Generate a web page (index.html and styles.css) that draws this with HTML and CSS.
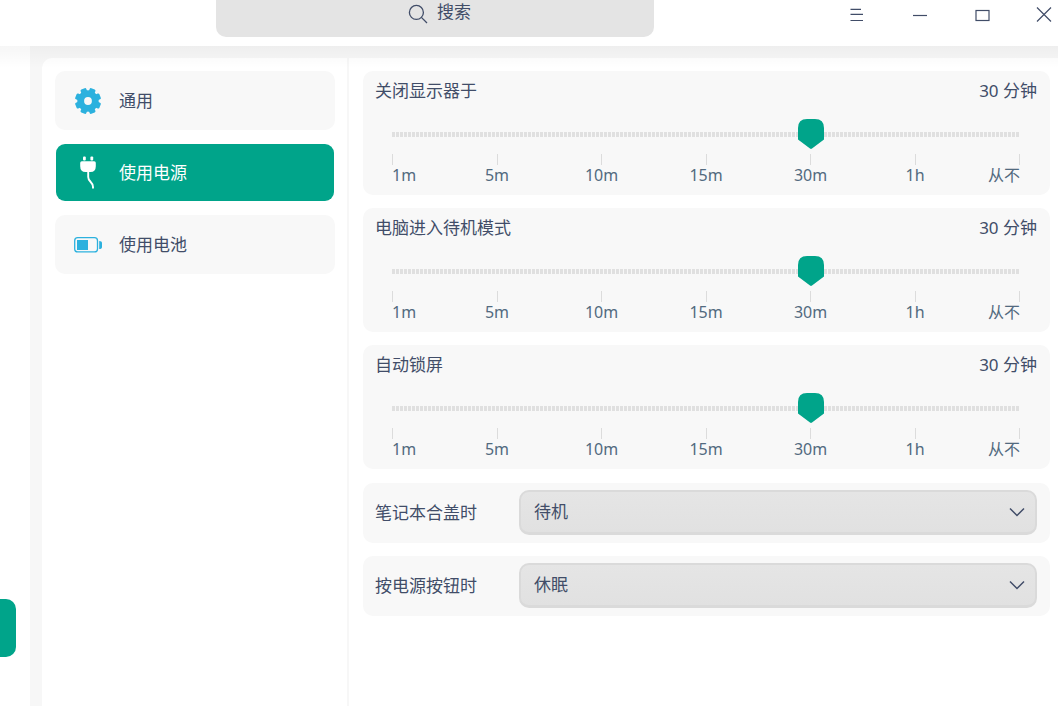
FILE: index.html
```html
<!DOCTYPE html>
<html lang="zh-CN">
<head>
    <meta charset="UTF-8">
    <meta name="viewport" content="width=device-width, initial-scale=1.0">
    <title>电源管理</title>
    <link rel="stylesheet" href="styles.css">
</head>
<body>
    <header class="titlebar">
        <label class="search">
            <svg width="20" height="20" viewBox="0 0 20 20" fill="none" stroke="currentColor" stroke-width="1.3">
                <circle cx="8.4" cy="8.4" r="7"/>
                <path d="M13.4 13.4 L19 19"/>
            </svg>
            <input type="text" class="search-input" placeholder="搜索" aria-label="搜索">
        </label>
        <div class="window-controls">
            <button type="button" class="window-button" aria-label="菜单">
                <svg width="16" height="16" viewBox="0 0 16 16" fill="none" stroke="currentColor" stroke-width="1.2">
                    <path d="M0.5 2.3 H11 M0.5 7.3 H13 M0.5 13.5 H13"/>
                </svg>
            </button>
            <button type="button" class="window-button" aria-label="最小化">
                <svg width="16" height="16" viewBox="0 0 16 16" fill="none" stroke="currentColor" stroke-width="1.2">
                    <path d="M1 8.5 H15"/>
                </svg>
            </button>
            <button type="button" class="window-button" aria-label="最大化">
                <svg width="16" height="16" viewBox="0 0 16 16" fill="none" stroke="currentColor" stroke-width="1.2">
                    <rect x="2" y="3.5" width="13" height="10"/>
                </svg>
            </button>
            <button type="button" class="window-button" aria-label="关闭">
                <svg width="16" height="16" viewBox="0 0 16 16" fill="none" stroke="currentColor" stroke-width="1.2">
                    <path d="M1 0.5 L15 14.5 M15 0.5 L1 14.5"/>
                </svg>
            </button>
        </div>
    </header>

    <div class="main">
        <aside class="rail">
            <div class="rail-active"></div>
        </aside>

        <div class="workspace">
            <nav class="nav">
                <a href="#" class="nav-item">
                    <svg class="nav-icon" width="32" height="34" viewBox="-16 -17 32 34" fill="#2cb1de">
                        <circle r="7.3" fill="none" stroke="#2cb1de" stroke-width="6.8"/>
                        <g id="teeth">
                            <rect x="-3.1" y="-13.1" width="6.2" height="5" rx="1.3" transform="rotate(22.5)"/>
                            <rect x="-3.1" y="-13.1" width="6.2" height="5" rx="1.3" transform="rotate(67.5)"/>
                            <rect x="-3.1" y="-13.1" width="6.2" height="5" rx="1.3" transform="rotate(112.5)"/>
                            <rect x="-3.1" y="-13.1" width="6.2" height="5" rx="1.3" transform="rotate(157.5)"/>
                        </g>
                        <use href="#teeth" transform="rotate(180)"/>
                    </svg>
                    <span>通用</span>
                </a>
                <a href="#" class="nav-item active">
                    <svg class="nav-icon" width="32" height="34" viewBox="0 0 32 34" fill="#fff">
                        <rect x="11" y="0.5" width="2.8" height="4" rx="1"/>
                        <rect x="18.4" y="0.5" width="2.8" height="4" rx="1"/>
                        <path d="M9.8 5.3 H22.2 Q23.8 5.3 23.8 6.9 V10 Q23.8 16 18.5 16 H13.5 Q8.2 16 8.2 10 V6.9 Q8.2 5.3 9.8 5.3 Z"/>
                        <path d="M16.2 15 V21 C16.2 26 21 25.5 21 31 V32.5" fill="none" stroke="#fff" stroke-width="1.9"/>
                    </svg>
                    <span>使用电源</span>
                </a>
                <a href="#" class="nav-item">
                    <svg class="nav-icon" width="32" height="34" viewBox="0 0 32 34" fill="#2cb1de">
                        <rect x="2.7" y="9.7" width="22.8" height="14.2" rx="3" fill="none" stroke="#2cb1de" stroke-width="1.3"/>
                        <rect x="5" y="12" width="11" height="10"/>
                        <path d="M27.2 13 Q30 13 30 15 V19 Q30 21 27.2 21 Z"/>
                    </svg>
                    <span>使用电池</span>
                </a>
            </nav>

            <main class="content">
                <div class="group">
                    <section class="card">
                        <div class="card-header">
                            <label for="display-off">关闭显示器于</label>
                            <output for="display-off">30 分钟</output>
                        </div>
                        <input type="range" class="slider" id="display-off" min="0" max="6" value="4">
                        <div class="scale">
                            <span>1m</span>
                            <span>5m</span>
                            <span>10m</span>
                            <span>15m</span>
                            <span>30m</span>
                            <span>1h</span>
                            <span>从不</span>
                        </div>
                    </section>
                    <section class="card">
                        <div class="card-header">
                            <label for="suspend">电脑进入待机模式</label>
                            <output for="suspend">30 分钟</output>
                        </div>
                        <input type="range" class="slider" id="suspend" min="0" max="6" value="4">
                        <div class="scale">
                            <span>1m</span>
                            <span>5m</span>
                            <span>10m</span>
                            <span>15m</span>
                            <span>30m</span>
                            <span>1h</span>
                            <span>从不</span>
                        </div>
                    </section>
                    <section class="card">
                        <div class="card-header">
                            <label for="auto-lock">自动锁屏</label>
                            <output for="auto-lock">30 分钟</output>
                        </div>
                        <input type="range" class="slider" id="auto-lock" min="0" max="6" value="4">
                        <div class="scale">
                            <span>1m</span>
                            <span>5m</span>
                            <span>10m</span>
                            <span>15m</span>
                            <span>30m</span>
                            <span>1h</span>
                            <span>从不</span>
                        </div>
                    </section>
                </div>

                <div class="group">
                    <section class="card card-row">
                        <label for="lid-close">笔记本合盖时</label>
                        <select class="select" id="lid-close">
                            <option selected>待机</option>
                            <option>休眠</option>
                            <option>关闭显示器</option>
                        </select>
                    </section>
                    <section class="card card-row">
                        <label for="power-button">按电源按钮时</label>
                        <select class="select" id="power-button">
                            <option>待机</option>
                            <option selected>休眠</option>
                            <option>关机</option>
                        </select>
                    </section>
                </div>
            </main>
        </div>
    </div>

    <script>
        const labels = ["1 分钟", "5 分钟", "10 分钟", "15 分钟", "30 分钟", "1 小时", "从不"];

        document.querySelectorAll(".slider").forEach(function(slider) {
            slider.addEventListener("input", function() {
                document.querySelector('output[for="' + slider.id + '"]').textContent = labels[slider.value];
            });
        });
    </script>
</body>
</html>
```

FILE: styles.css
```css
* {
    margin: 0;
    padding: 0;
    box-sizing: border-box;
}

body {
    font-family: "Noto Sans", "Noto Sans CJK SC", sans-serif;
    font-size: 17px;
    line-height: 24px;
    color: #414d68;
    background: #fff;
    min-height: 100vh;
    display: flex;
    flex-direction: column;
}

button,
input,
select {
    font: inherit;
    color: inherit;
    border: none;
    outline: none;
    background: none;
}

/* Title bar */
.titlebar {
    display: grid;
    grid-template-columns: 216px minmax(0, 438px) 1fr;
    align-items: start;
    height: 46px;
}

.search {
    grid-column: 2;
    display: flex;
    justify-content: center;
    gap: 9px;
    height: 37px;
    padding-left: 11px;
    border-radius: 0 0 10px 10px;
    background: #e4e4e4;
}

.search svg {
    margin-top: 4px;
}

.search-input {
    width: 36px;
    height: 24px;
}

.search-input::placeholder {
    color: #414d68;
    opacity: 1;
}

.window-controls {
    display: flex;
    justify-content: flex-end;
    gap: 34px;
}

.window-button {
    width: 28px;
    height: 30px;
    display: flex;
    align-items: center;
    justify-content: center;
}

/* Layout */
.main {
    flex: 1;
    display: flex;
    position: relative;
}

/* Shadow cast by the title bar */
.main::before {
    content: "";
    position: absolute;
    top: 0;
    left: 0;
    right: 0;
    height: 22px;
    background: linear-gradient(rgba(0, 0, 0, 0.035), rgba(0, 0, 0, 0));
    pointer-events: none;
}

.rail {
    width: 30px;
    display: flex;
    flex-direction: column;
    justify-content: flex-end;
    padding-bottom: 49px;
}

.rail-active {
    width: 16px;
    height: 58px;
    border-radius: 0 10px 10px 0;
    background: #00a48a;
}

.workspace {
    flex: 1;
    display: flex;
    gap: 2px;
    padding: 12px 0 0 12px;
    background: #f7f7f7;
}

.nav {
    width: 305px;
    display: flex;
    flex-direction: column;
    gap: 13px;
    padding: 13px 12px 13px 13px;
    border-radius: 10px 0 0 0;
    background: #fff;
}

.nav-item {
    display: flex;
    align-items: center;
    gap: 15px;
    height: 59px;
    padding-left: 16px;
    border: 1px solid transparent;
    border-radius: 10px;
    background: #f8f8f8;
    color: #414d68;
    text-decoration: none;
}

.nav-item.active {
    background: #00a48a;
    background-clip: padding-box;
    color: #fff;
}

.content {
    flex: 1;
    display: flex;
    flex-direction: column;
    gap: 14px;
    padding: 13px 8px 13px 14px;
    background: #fff;
}

.group {
    display: flex;
    flex-direction: column;
    gap: 13px;
}

/* Cards */
.card {
    padding: 8px 13px 9px 12px;
    border-radius: 10px;
    background: #f8f8f8;
}

.card-header {
    display: flex;
    justify-content: space-between;
}

.card-row {
    display: grid;
    grid-template-columns: 144px 1fr;
    align-items: center;
    padding: 7px 13px 8px 12px;
}

/* Slider */
.slider {
    appearance: none;
    display: block;
    width: calc(100% - 8px);
    height: 30px;
    margin: 16px 4px 5px;
}

.slider::-webkit-slider-runnable-track {
    height: 30px;
    background: repeating-linear-gradient(90deg, #e0e0e0 0, #e0e0e0 3px, #f8f8f8 3px, #f8f8f8 4px) center 13px / calc(100% - 26px) 5px no-repeat;
}

.slider::-webkit-slider-thumb {
    appearance: none;
    width: 26px;
    height: 30px;
    background: url("data:image/svg+xml,%3Csvg xmlns='http://www.w3.org/2000/svg' viewBox='0 0 26 30'%3E%3Cpath d='M9 0H17Q26 0 26 9V20.5L14 29.6Q13 30.4 12 29.6L0 20.5V9Q0 0 9 0Z' fill='%2300a48a'/%3E%3C/svg%3E") no-repeat;
}

.scale {
    display: flex;
    justify-content: space-between;
    padding: 0 17px;
    font-size: 16px;
    line-height: 21px;
    color: #526a7f;
}

.scale span {
    width: 1px;
    display: flex;
    flex-direction: column;
    align-items: center;
    white-space: nowrap;
}

.scale span::before {
    content: "";
    width: 1px;
    height: 11px;
    background: #dcdcdc;
}

.scale span:first-child {
    align-items: flex-start;
}

.scale span:last-child {
    align-items: flex-end;
}

/* Select */
.select {
    appearance: none;
    width: 100%;
    height: 45px;
    padding: 0 40px 0 13px;
    border: 2px solid #dadada;
    border-bottom-width: 3px;
    border-radius: 10px;
    background: url("data:image/svg+xml,%3Csvg xmlns='http://www.w3.org/2000/svg' viewBox='0 0 16 10'%3E%3Cpath d='M1 1.5L8 8.5L15 1.5' fill='none' stroke='%23414d68' stroke-width='1.5'/%3E%3C/svg%3E") right 10px center / 16px 10px no-repeat, linear-gradient(#e5e5e5, #e1e1e1);
}
```
